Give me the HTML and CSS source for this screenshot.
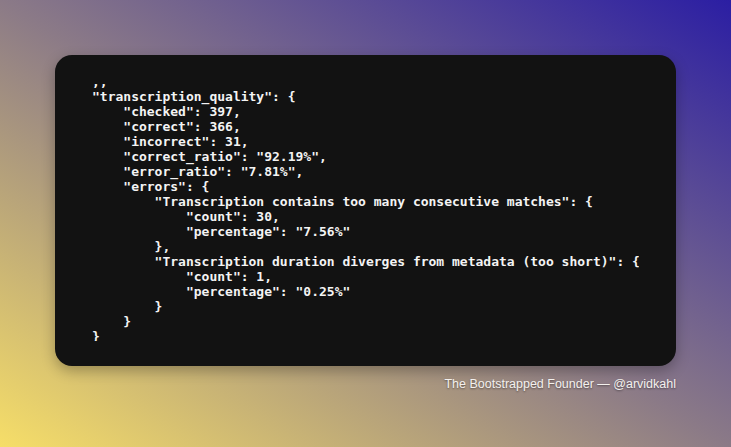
FILE: index.html
```html
<!DOCTYPE html>
<html>
<head>
<meta charset="utf-8">
<link rel="stylesheet" href="styles.css">
</head>
<body>
<div class="frame">
  <div class="card">
    <div class="viewport">
<pre class="code">,,
"transcription_quality": {
    "checked": 397,
    "correct": 366,
    "incorrect": 31,
    "correct_ratio": "92.19%",
    "error_ratio": "7.81%",
    "errors": {
        "Transcription contains too many consecutive matches": {
            "count": 30,
            "percentage": "7.56%"
        },
        "Transcription duration diverges from metadata (too short)": {
            "count": 1,
            "percentage": "0.25%"
        }
    }
}</pre>
    </div>
  </div>
  <div class="credit">The Bootstrapped Founder — @arvidkahl</div>
</div>
</body>
</html>
```

FILE: styles.css
```css
html, body {
  margin: 0;
  padding: 0;
  width: 731px;
  height: 447px;
  overflow: hidden;
}
body {
  background: linear-gradient(to top right, #f6de68 0%, #8b7a87 50%, #2b1ea3 100%);
}
.frame {
  display: flex;
  flex-direction: column;
  padding: 55px 55px 0 55px;
}
.card {
  height: 311px;
  box-sizing: border-box;
  background: #121212;
  border-radius: 17px;
  box-shadow: 0 5px 14px rgba(0, 0, 0, 0.28);
  padding: 26px 37px 0 37px;
}
.viewport {
  height: 260px;
  overflow: hidden;
}
.code {
  margin: -7px 0 0 0;
  font-family: "DejaVu Sans Mono", monospace;
  font-size: 13px;
  font-weight: bold;
  line-height: 15px;
  color: #f4f4f4;
  white-space: pre;
}
.credit {
  align-self: flex-end;
  margin-top: 11px;
  font-family: "Liberation Sans", Arial, sans-serif;
  font-size: 12.5px;
  line-height: 15px;
  color: #f4f1ee;
  text-shadow: 0 1px 2px rgba(0, 0, 0, 0.45);
}
```
